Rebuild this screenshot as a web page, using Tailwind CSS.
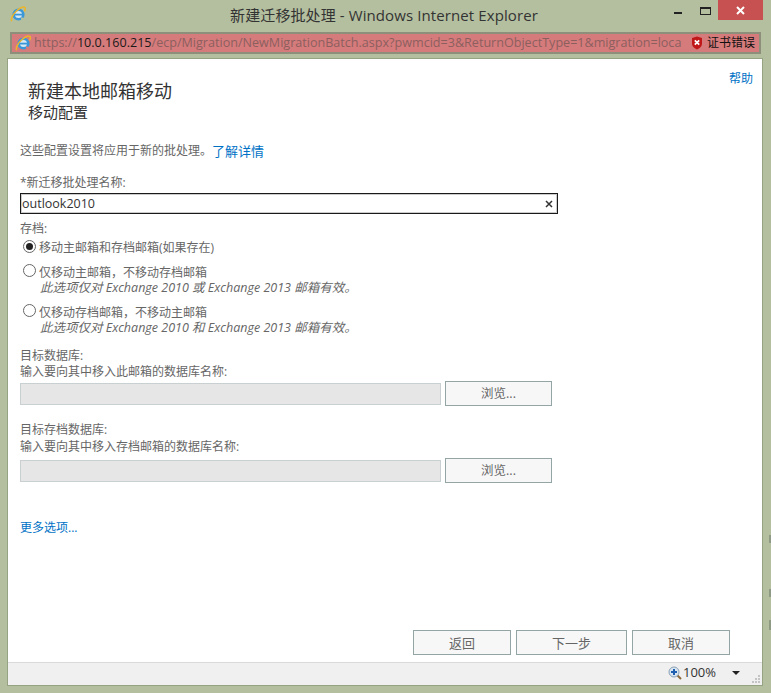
<!DOCTYPE html>
<html lang="zh-CN">
<head>
<meta charset="utf-8">
<script src="https://cdn.jsdelivr.net/npm/@tailwindcss/browser@4"></script>
<title>新建迁移批处理</title>
</head>
<body class="relative m-0 w-[771px] h-[693px] overflow-hidden bg-[#b3bf9f] font-['Open_Sans','Noto_Sans_CJK_SC',sans-serif] text-[12px] text-[#666]">
<div class="flex flex-col h-[693px]">
  <!-- title bar -->
  <div class="relative h-[32px] shrink-0 flex items-start">
    <svg class="ml-[10px] mt-[6px] w-[16px] h-[16px]" viewBox="0 0 16 16"><circle cx="8.500" cy="8.500" r="4.800" fill="#d9eaf5" stroke="#3a97d8" stroke-width="2.600"/><path d="M4.500 8.600h8.300" stroke="#3a97d8" stroke-width="1.800"/><path d="M11 11.200l3 .8v1.500l-3 .5z" fill="#b3bf9f"/><path d="M1.800 15.200C.2 13.500 3 8 6.500 5S13.500.3 15 1.500c.7.800.3 2.300-.6 4" fill="none" stroke="#edb52a" stroke-width="1.500"/></svg>
    <div class="absolute left-0 right-[3px] top-[3px] text-center text-[15px] leading-[24px] tracking-[0.1px] text-[#333]">新建迁移批处理 - Windows Internet Explorer</div>
    <div class="ml-auto mr-[8px] flex items-start">
      <div class="w-[8px] h-[2px] bg-[#222] mt-[12px] mr-[18px]"></div>
      <div class="w-[11px] h-[8px] border border-[#222] border-t-2 mt-[7px] mr-[7px] box-border"></div>
      <div class="w-[45px] h-[20px] bg-[#c75050] flex items-center justify-center">
        <svg class="w-[9px] h-[9px]" viewBox="0 0 9 9"><path d="M1 1l7 7M8 1L1 8" stroke="#fff" stroke-width="2"/></svg>
      </div>
    </div>
  </div>
  <!-- address bar -->
  <div class="ml-[10px] h-[22px] shrink-0 bg-[#d67b7b] border-2 border-[#8d8f7b] flex items-center pl-[3px] pr-[3px] w-[751px]">
    <svg class="w-[16px] h-[16px] shrink-0" viewBox="0 0 16 16"><circle cx="8.500" cy="8.500" r="4.800" fill="#d9eaf5" stroke="#3a97d8" stroke-width="2.600"/><path d="M4.500 8.600h8.300" stroke="#3a97d8" stroke-width="1.800"/><path d="M11 11.200l3 .8v1.500l-3 .5z" fill="#d67b7b"/><path d="M1.800 15.200C.2 13.500 3 8 6.500 5S13.500.3 15 1.500c.7.800.3 2.300-.6 4" fill="none" stroke="#edb52a" stroke-width="1.500"/></svg>
    <div class="ml-[3px] w-[648px] overflow-hidden whitespace-nowrap text-[12.580px] leading-[18px] text-[#8c5f5f]">https://<span class="text-[#1a1a1a]">10.0.160.215</span>/ecp/Migration/NewMigrationBatch.aspx?pwmcid=3&amp;ReturnObjectType=1&amp;migration=loca</div>
    <svg class="ml-[9px] w-[12px] h-[14px] shrink-0" viewBox="0 0 12 14"><path d="M6 .5l5 1.500v6c0 2.500-2.500 4.500-5 5.500-2.500-1-5-3-5-5.500V2z" fill="#c01818"/><path d="M3.800 4.300l4.400 4.400M8.200 4.300L3.800 8.700" stroke="#fff" stroke-width="1.700"/></svg>
    <span class="ml-[4px] whitespace-nowrap text-[12px] text-[#111]">证书错误</span>
  </div>
  <!-- client -->
  <div class="relative mt-[4px] ml-[7px] w-[756px] flex-1 border border-[#96a383] bg-white flex flex-col">
    <div class="flex-1 pl-[12px] text-[12px] leading-[16px] relative">
      <a class="absolute right-[9px] top-[12px] text-[12px] text-[#0072c6]">帮助</a>
      <div class="pl-[8px] pt-[19px]">
        <div class="text-[18px] leading-[26px] text-[#333]">新建本地邮箱移动</div>
        <div class="text-[15px] leading-[20px] mt-[-2px] text-[#333]">移动配置</div>
      </div>
      <div class="mt-[19px] h-[20px] flex items-center text-[12px]">这些配置设置将应用于新的批处理。<a class="text-[13px] text-[#0072c6]">了解详情</a></div>
      <div class="mt-[14px] h-[16px]">*新迁移批处理名称:</div>
      <div class="mt-[2px] w-[538px] h-[21px] border border-[#1a1a1a] shadow-[inset_0_0_0_1px_rgba(0,0,0,0.2)] flex items-center justify-between pl-[1px] pr-[4px] text-[12.500px] text-[#333]">
        <span>outlook2010</span>
        <svg class="w-[8px] h-[8px]" viewBox="0 0 8 8"><path d="M1 1l6 6M7 1L1 7" stroke="#333" stroke-width="1.500"/></svg>
      </div>
      <div class="mt-[7px] h-[16px]">存档:</div>
      <div class="mt-[2px] h-[16px] flex items-center pl-[3px]">
        <span class="w-[13px] h-[13px] rounded-full border border-[#666] flex items-center justify-center mr-[3px] mt-[-2px]"><span class="w-[7px] h-[7px] rounded-full bg-[#222]"></span></span>
        <span class="mt-[1px]">移动主邮箱和存档邮箱(如果存在)</span>
      </div>
      <div class="mt-[9px] h-[16px] flex items-center pl-[3px]">
        <span class="w-[13px] h-[13px] rounded-full border border-[#666] mr-[3px] mt-[-3px]"></span>
        <span>仅移动主邮箱<span class="font-['Noto_Sans_CJK_TC']">，</span>不移动存档邮箱</span>
      </div>
      <div class="h-[16px] pl-[20px] italic text-[12.500px]">此选项仅对 Exchange 2010 或 Exchange 2013 邮箱有效。</div>
      <div class="mt-[8px] h-[16px] flex items-center pl-[3px]">
        <span class="w-[13px] h-[13px] rounded-full border border-[#666] mr-[3px] mt-[-3px]"></span>
        <span>仅移动存档邮箱<span class="font-['Noto_Sans_CJK_TC']">，</span>不移动主邮箱</span>
      </div>
      <div class="h-[16px] pl-[20px] italic text-[12.500px]">此选项仅对 Exchange 2010 和 Exchange 2013 邮箱有效。</div>
      <div class="mt-[13px] h-[14px] leading-[14px]">目标数据库:</div>
      <div class="h-[14px] mt-[2px] leading-[14px]">输入要向其中移入此邮箱的数据库名称:</div>
      <div class="mt-[2px] flex items-center">
        <div class="w-[421px] h-[22px] bg-[#e6e6e6] border border-[#c8d0d2]"></div>
        <button class="ml-[4px] w-[107px] h-[25px] bg-[#f7f7f7] border border-[#93a5a5] text-[12.500px] text-[#666]">浏览...</button>
      </div>
      <div class="mt-[17px] h-[14px] leading-[14px]">目标存档数据库:</div>
      <div class="h-[14px] mt-[3px] leading-[14px]">输入要向其中移入存档邮箱的数据库名称:</div>
      <div class="mt-[4px] flex items-center">
        <div class="w-[421px] h-[22px] bg-[#e6e6e6] border border-[#c8d0d2]"></div>
        <button class="ml-[4px] w-[107px] h-[25px] bg-[#f7f7f7] border border-[#93a5a5] text-[12.500px] text-[#666]">浏览...</button>
      </div>
      <a class="block mt-[37px] text-[12px] text-[#0072c6]">更多选项...</a>
      <div class="absolute left-[405px] top-[571px] flex gap-[5px]">
        <button class="w-[98px] h-[25px] bg-[#f7f7f7] border border-[#93a5a5] text-[13px] text-[#666]">返回</button>
        <button class="w-[111px] h-[25px] bg-[#f7f7f7] border border-[#93a5a5] text-[13px] text-[#666]">下一步</button>
        <button class="w-[98px] h-[25px] bg-[#f7f7f7] border border-[#93a5a5] text-[13px] text-[#666]">取消</button>
      </div>
    </div>
    <!-- status -->
    <div class="h-[23px] shrink-0 bg-[#f0f0f0] border-t border-[#d9d9d9] flex items-center justify-end pr-[2px] pb-[2px] text-[13px] text-[#333]">
      <svg class="w-[14px] h-[14px]" viewBox="0 0 14 14"><path d="M8.500 8.500L13 13" stroke="#8a6a3a" stroke-width="2"/><circle cx="6" cy="6" r="5" fill="#d8e6f2" stroke="#8aa0b4"/><path d="M3 6h6M6 3v6" stroke="#1f5fb0" stroke-width="2"/></svg>
      <span class="ml-[1px] w-[40px]">100%</span>
      <span class="ml-[9px] w-0 h-0 border-x-[4px] border-x-transparent border-t-[4px] border-t-[#222]"></span>
      <svg class="ml-[12px] w-[8px] h-[8px] mt-[12px]" viewBox="0 0 8 8"><path d="M6 0h2v2H6zM3 3h2v2H3zM6 3h2v2H6zM0 6h2v2H0zM3 6h2v2H3zM6 6h2v2H6z" fill="#c4c4c4"/></svg>
    </div>
  </div>
  <div class="h-[7px] shrink-0"></div>
</div>
<div class="absolute left-[769px] top-[535px] w-[2px] h-[8px] bg-[#8f9a85]"></div>
<div class="absolute left-[769px] top-[589px] w-[2px] h-[8px] bg-[#8f9a85]"></div>
<div class="absolute left-[769px] top-[620px] w-[2px] h-[10px] bg-[#8f9a85]"></div>
</body>
</html>
